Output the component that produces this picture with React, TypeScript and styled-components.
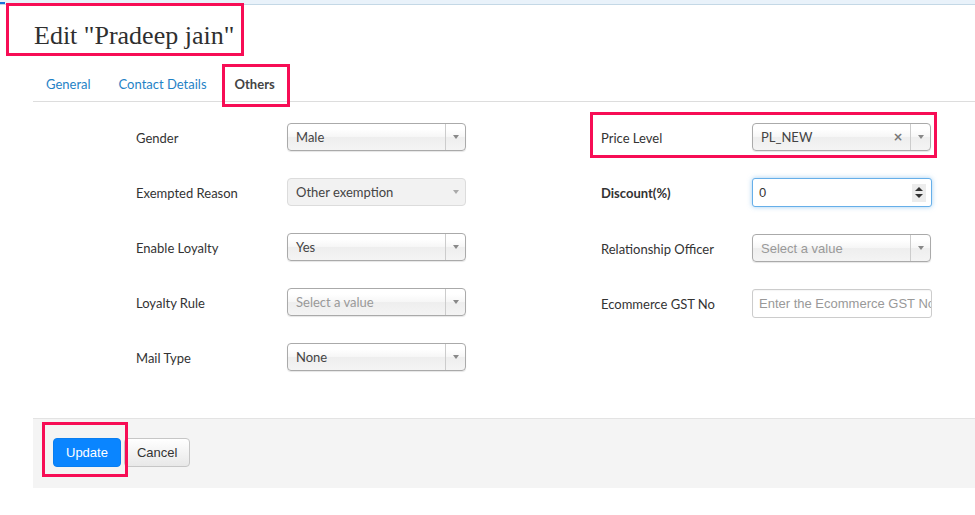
import React from "react";
import styled, { createGlobalStyle } from "styled-components";

const pink = "#f70d55";

const GlobalStyle = createGlobalStyle`
  html, body {
    margin: 0;
    background: #fff;
  }
  body {
    font-family: Lato, "Open Sans", sans-serif;
    font-size: 13px;
    color: #333;
  }
`;

type Inset = { $t: number; $r: number; $b: number; $l: number; $inline?: boolean };

// annotation box drawn over content
const Highlight = styled.div<Inset>`
  position: relative;
  display: ${(p) => (p.$inline ? "inline-block" : "block")};
  &::after {
    content: "";
    position: absolute;
    top: ${(p) => -p.$t}px;
    right: ${(p) => -p.$r}px;
    bottom: ${(p) => -p.$b}px;
    left: ${(p) => -p.$l}px;
    border: 3px solid ${pink};
    pointer-events: none;
  }
`;

const TopStrip = styled.div`
  display: flex;
  height: 4px;
  background: #e9f2fa;
  border-bottom: 1px solid #c4d8e6;
`;

const TopMark = styled.span`
  width: 5px;
  height: 2px;
  margin-top: 2px;
  background: #1a73d9;
`;

const Header = styled.header`
  padding: 16px 0 0 34px;
`;

const Title = styled.h1`
  margin: 0;
  font-family: "Liberation Serif", "DejaVu Serif", serif;
  font-weight: normal;
  font-size: 26px;
  line-height: 30px;
  color: #2f2f2f;
`;

const Content = styled.div`
  margin: 12px 0 0 33px;
`;

const Tabs = styled.nav`
  display: flex;
  border-bottom: 1px solid #ddd;
`;

const Tab = styled.a<{ $active?: boolean }>`
  display: block;
  padding: 12px 13px 8px;
  margin-right: 2px;
  line-height: 18px;
  font-size: 13px;
  font-weight: ${(p) => (p.$active ? 700 : 400)};
  color: ${(p) => (p.$active ? "#444" : "#1f82c6")};
  text-decoration: none;
  cursor: pointer;
`;

const Form = styled.div`
  display: flex;
  gap: 135px;
  padding: 21px 0 0 103px;
`;

const Column = styled.div`
  display: flex;
  flex-direction: column;
  gap: 27px;
`;

const FieldRow = styled.div`
  display: flex;
  align-items: center;
`;

const Label = styled.label<{ $bold?: boolean }>`
  width: 151px;
  padding-top: 1px;
  font-size: 13px;
  font-weight: ${(p) => (p.$bold ? 700 : 400)};
  color: #333;
`;

const SelectBox = styled.div<{ $w: number; $disabled?: boolean }>`
  display: flex;
  align-items: stretch;
  box-sizing: border-box;
  width: ${(p) => p.$w}px;
  height: 28px;
  border: 1px solid ${(p) => (p.$disabled ? "#dcdcdc" : "#aaa")};
  border-radius: 4px;
  background: ${(p) =>
    p.$disabled
      ? "#f2f2f2"
      : "linear-gradient(#fff 20%, #f6f6f6 50%, #eee 52%, #f4f4f4 100%)"};
  box-shadow: ${(p) => (p.$disabled ? "none" : "0 1px 1px rgba(0,0,0,0.1)")};
  overflow: hidden;
`;

const SelectText = styled.span<{ $placeholder?: boolean; $font?: string }>`
  flex: 1;
  display: flex;
  align-items: center;
  padding-left: 8px;
  font-family: ${(p) => p.$font || "Lato, sans-serif"};
  font-size: 13px;
  color: ${(p) => (p.$placeholder ? "#999" : "#444")};
  white-space: nowrap;
  overflow: hidden;
`;

const ClearMark = styled.span`
  display: flex;
  align-items: center;
  padding-right: 7px;
  font-family: "DejaVu Sans", sans-serif;
  font-size: 12px;
  font-weight: 700;
  color: #777;
`;

const ArrowCell = styled.span<{ $divider?: boolean }>`
  display: flex;
  align-items: center;
  justify-content: center;
  width: 19px;
  border-left: 1px solid ${(p) => (p.$divider ? "#ccc" : "transparent")};
`;

const Triangle = styled.span<{ $light?: boolean }>`
  width: 0;
  height: 0;
  border-left: 3.5px solid transparent;
  border-right: 3.5px solid transparent;
  border-top: 4px solid ${(p) => (p.$light ? "#aaa" : "#888")};
`;

const TextInput = styled.div<{ $focus?: boolean }>`
  display: flex;
  align-items: center;
  box-sizing: border-box;
  width: 180px;
  height: 29px;
  border: 1px solid ${(p) => (p.$focus ? "#66afe9" : "#ccc")};
  border-radius: 3px;
  box-shadow: ${(p) =>
    p.$focus ? "0 0 5px rgba(102,175,233,0.6)" : "inset 0 1px 1px rgba(0,0,0,0.04)"};
  background: #fff;
  overflow: hidden;
`;

const InputText = styled.span<{ $placeholder?: boolean }>`
  flex: 1;
  padding-left: 6px;
  font-family: "Liberation Sans", Arial, sans-serif;
  font-size: 13px;
  color: ${(p) => (p.$placeholder ? "#999" : "#333")};
  white-space: nowrap;
  overflow: hidden;
`;

const Spinner = styled.span`
  display: flex;
  flex-direction: column;
  align-items: center;
  justify-content: center;
  gap: 3px;
  width: 14px;
  height: 18px;
  margin-right: 5px;
  background: #ececec;
`;

const SpinUp = styled.span`
  width: 0;
  height: 0;
  border-left: 4px solid transparent;
  border-right: 4px solid transparent;
  border-bottom: 4px solid #333;
`;

const SpinDown = styled.span`
  width: 0;
  height: 0;
  border-left: 4px solid transparent;
  border-right: 4px solid transparent;
  border-top: 4px solid #333;
`;

const Footer = styled.footer`
  display: flex;
  align-items: center;
  margin-top: 47px;
  padding: 19px 20px 21px;
  background: #f4f4f4;
  border-top: 1px solid #e3e3e3;
`;

const Button = styled.button<{ $primary?: boolean }>`
  height: 29px;
  padding: 0 12px;
  margin-right: 3px;
  font-family: "Liberation Sans", Arial, sans-serif;
  font-size: 13px;
  border-radius: 4px;
  border: 1px solid ${(p) => (p.$primary ? "#0a7ef0" : "#c6c6c6")};
  background: ${(p) => (p.$primary ? "#0a85ff" : "linear-gradient(#fff, #e8e8e8)")};
  color: ${(p) => (p.$primary ? "#fff" : "#333")};
  cursor: pointer;
`;

type SelectProps = {
  value?: string;
  placeholder?: string;
  width?: number;
  disabled?: boolean;
  clearable?: boolean;
  font?: string;
};

const Select = ({ value, placeholder, width = 179, disabled, clearable, font }: SelectProps) => (
  <SelectBox $w={width} $disabled={disabled}>
    <SelectText $placeholder={!value} $font={font}>
      {value || placeholder}
    </SelectText>
    {clearable && <ClearMark>×</ClearMark>}
    <ArrowCell $divider={!disabled}>
      <Triangle $light={disabled} />
    </ArrowCell>
  </SelectBox>
);

const Field = ({ label, bold, children }: { label: string; bold?: boolean; children: React.ReactNode }) => (
  <FieldRow>
    <Label $bold={bold}>{label}</Label>
    {children}
  </FieldRow>
);

const arial = '"Liberation Sans", Arial, sans-serif';

const App = () => {
  return (
    <>
      <GlobalStyle />
      <TopStrip>
        <TopMark />
      </TopStrip>
      <Header>
        <Highlight $inline $t={18} $r={10} $b={5} $l={28}>
          <Title>Edit "Pradeep jain"</Title>
        </Highlight>
      </Header>
      <Content>
        <Tabs>
          <Tab>General</Tab>
          <Tab>Contact Details</Tab>
          <Highlight $t={-1} $r={0} $b={6} $l={0}>
            <Tab $active>Others</Tab>
          </Highlight>
        </Tabs>
        <Form>
          <Column>
            <Field label="Gender">
              <Select value="Male" />
            </Field>
            <Field label="Exempted Reason">
              <Select value="Other exemption" disabled />
            </Field>
            <Field label="Enable Loyalty">
              <Select value="Yes" />
            </Field>
            <Field label="Loyalty Rule">
              <Select placeholder="Select a value" />
            </Field>
            <Field label="Mail Type">
              <Select value="None" />
            </Field>
          </Column>
          <Column>
            <Highlight $t={11} $r={5} $b={7} $l={11}>
              <Field label="Price Level">
                <Select value="PL_NEW" width={179} clearable />
              </Field>
            </Highlight>
            <Field label="Discount(%)" bold>
              <TextInput $focus>
                <InputText>0</InputText>
                <Spinner>
                  <SpinUp />
                  <SpinDown />
                </Spinner>
              </TextInput>
            </Field>
            <Field label="Relationship Officer">
              <Select placeholder="Select a value" width={179} font={arial} />
            </Field>
            <Field label="Ecommerce GST No">
              <TextInput>
                <InputText $placeholder>Enter the Ecommerce GST No</InputText>
              </TextInput>
            </Field>
          </Column>
        </Form>
        <Footer>
          <Highlight $t={16} $r={4} $b={10} $l={11}>
            <Button $primary>Update</Button>
          </Highlight>
          <Button>Cancel</Button>
        </Footer>
      </Content>
    </>
  );
};

export default App;
